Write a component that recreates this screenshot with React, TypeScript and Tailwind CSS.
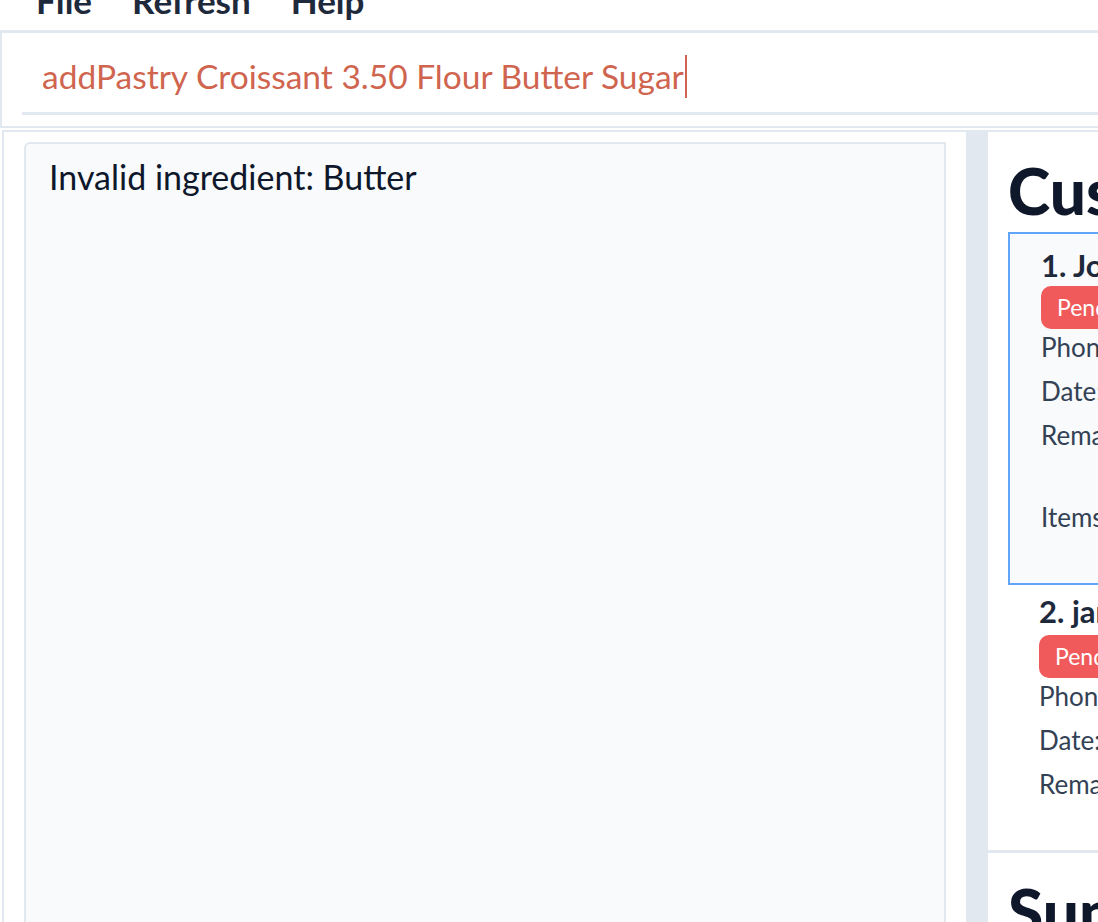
function CustomerCard({ index, name, phone, date, remarks, items, selected }: any) {
  return (
    <div
      className={
        selected
          ? "border-2 border-[#60a5fa] bg-[#f8fafc] pl-[31px] pt-[14px] pb-[44px]"
          : "border-2 border-transparent pl-[29px] pt-[7px] pb-[22px]"
      }
    >
      <div className="text-[31px] leading-[34px] font-bold text-[#1e293b] whitespace-nowrap">
        {index}. {name}
      </div>
      <div
        className={
          (selected ? "mt-[4px]" : "mt-[7px]") +
          " inline-flex h-[43px] items-center rounded-[10px] bg-[#f05a5a] px-[16px] text-[23px] text-white"
        }
      >
        Pending
      </div>
      <div className="-mt-[4px] flex flex-col text-[26px] leading-[44px] text-[#334155] whitespace-nowrap">
        <div>Phone: {phone}</div>
        <div>Date: {date}</div>
        <div>Remarks: {remarks}</div>
        {items && <div className="mt-[38px]">Items: {items}</div>}
      </div>
    </div>
  );
}

export default function App() {
  return (
    <div className="w-[1098px] h-[922px] overflow-hidden bg-white font-['Lato',sans-serif]">
      <div className="-mt-[29px] flex h-[59px] items-center gap-[40px] pl-[36px] text-[35px] font-bold text-[#1e293b]">
        <span>File</span>
        <span>Refresh</span>
        <span>Help</span>
      </div>

      <div className="h-[98px] border-t-[3px] border-b-2 border-l-2 border-[#e2e8f0] pl-[20px] pt-[12px]">
        <div className="flex h-[70px] items-center border-b-[3px] border-[#e2e8f0] pl-[20px] pb-[4px] text-[33.5px] text-[#d0654f]">
          <span>addPastry Croissant 3.50 Flour Butter Sugar</span>
          <span className="ml-[1px] h-[43px] w-[2px] bg-[#d0654f]" />
        </div>
      </div>

      <div className="mt-[2px] ml-[2px] flex h-[800px] border-t-2 border-l-2 border-[#e2e8f0]">
        <div className="flex-1 px-[20px] pt-[10px]">
          <div className="h-full rounded-tl-[6px] border-2 border-[#e2e8f0] bg-[#f8fafc] pl-[23px] pt-[13px] text-[34px] leading-[40px] text-[#0f172a]">
            Invalid ingredient: Butter
          </div>
        </div>

        <div className="w-[22px] bg-[#e2e8f0]" />

        <div className="w-[110px] overflow-hidden">
          <div className="w-[560px]">
            <div className="border-b-[3px] border-[#e2e8f0] pl-[20px] pb-[20px]">
              <h1 className="pt-[22px] pb-[4px] text-[64px] leading-[74px] font-black text-[#0f172a]">
                Customers
              </h1>
              <CustomerCard
                index={1}
                name="John Tan"
                phone="91234567"
                date="2024-03-15"
                remarks="Birthday cake order, please"
                items="Croissant x2"
                selected
              />
              <CustomerCard
                index={2}
                name="jane Lim"
                phone="98765432"
                date="2024-03-16"
                remarks="None"
              />
            </div>
            <div className="pl-[20px] pt-[22px]">
              <h1 className="text-[64px] leading-[74px] font-black text-[#0f172a]">Summary</h1>
            </div>
          </div>
        </div>
      </div>
    </div>
  );
}
